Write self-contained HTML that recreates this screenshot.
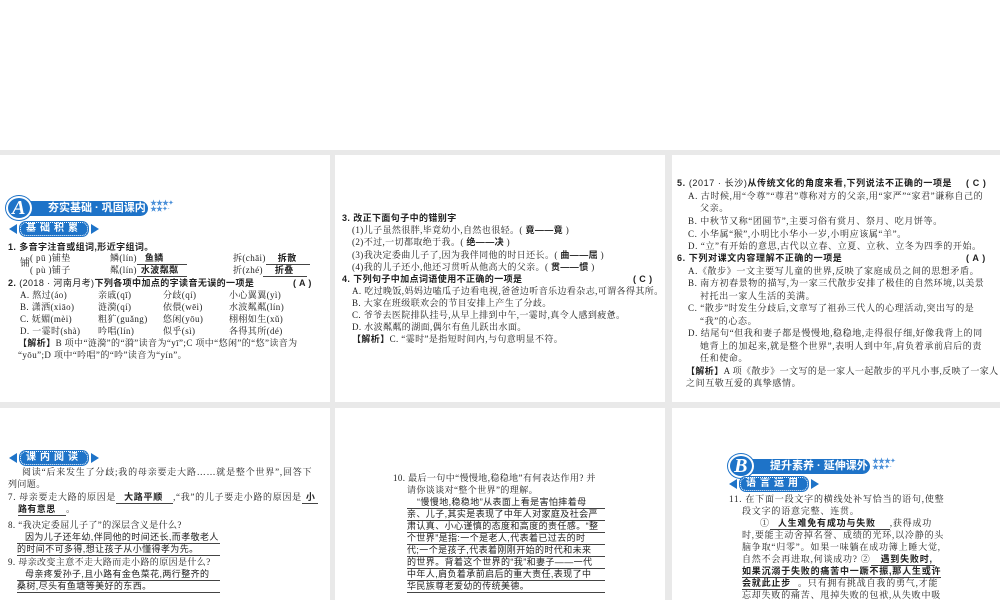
<!DOCTYPE html>
<html><head><meta charset="utf-8">
<style>
*{margin:0;padding:0;box-sizing:border-box}
body{width:1000px;height:600px;background:#fff;position:relative;overflow:hidden;font-family:"Liberation Serif","Noto Serif CJK SC",serif;font-size:9px;color:#222;letter-spacing:.4px}
.bg{position:absolute;left:0;top:150px;width:1000px;height:450px;background:#e9e9e9}
.p{position:absolute;background:#fff}
.l{position:absolute;white-space:nowrap;line-height:11px}
.b{font-family:"Liberation Sans","Noto Sans CJK SC",sans-serif;font-weight:bold}
.a{font-family:"Liberation Sans","Noto Sans CJK SC",sans-serif;font-weight:bold;border-bottom:1px solid #444}
.u{border-bottom:1px solid #444}
.hd{position:absolute;height:15px;background:#1e73c8;border-radius:0 8px 8px 0;color:#fff;font-family:"Liberation Sans","Noto Sans CJK SC",sans-serif;font-weight:bold;font-size:11px;line-height:15px;padding-left:20px;white-space:nowrap;letter-spacing:0}
.cir{position:absolute;width:26px;height:24px;border-radius:50%;background:#1e73c8;border:2px solid #fff;box-shadow:0 0 0 1px #1e73c8;color:#fff;font:italic bold 20px/20px "Liberation Serif",serif;text-align:center}
.st{position:absolute;color:#4a8fd8;font-size:7px;line-height:6px;letter-spacing:-1px}
.sub{position:absolute;height:14px}
.sub .t1{position:absolute;left:0;top:2px;width:0;height:0;border-top:5px solid transparent;border-bottom:5px solid transparent;border-right:8px solid #1e73c8}
.sub .t2{position:absolute;right:0;top:2px;width:0;height:0;border-top:5px solid transparent;border-bottom:5px solid transparent;border-left:8px solid #1e73c8}
.sub .pl{position:absolute;left:11px;right:11px;top:0;height:14px;background:#1e73c8;border-radius:6px;border:1px dotted #fff;box-shadow:0 0 0 1px #1e73c8;color:#fff;font-family:"Liberation Sans","Noto Sans CJK SC",sans-serif;font-weight:bold;font-size:10px;line-height:12px;text-align:center;letter-spacing:4px;white-space:nowrap}
.p3 .l{letter-spacing:.6px}
</style></head><body>
<div class="bg"></div>
<div class="p" style="left:0;top:155px;width:330px;height:247px"></div>
<div class="p" style="left:335px;top:155px;width:330px;height:247px"></div>
<div class="p" style="left:672px;top:155px;width:328px;height:247px"></div>
<div class="p" style="left:0;top:408px;width:330px;height:192px"></div>
<div class="p" style="left:335px;top:408px;width:330px;height:192px"></div>
<div class="p" style="left:672px;top:408px;width:328px;height:192px"></div>

<!-- Panel 1 -->
<div class="hd" style="left:28px;top:201px;width:120px">夯实基础 · 巩固课内</div>
<div class="cir" style="left:6px;top:196px">A</div>
<div class="st" style="left:150px;top:200px">★★★✦<br>★★✦ ·</div>
<div class="sub" style="left:9px;top:222px;width:90px"><div class="t1"></div><div class="pl">基础积累</div><div class="t2"></div></div>
<div class="l b" style="left:8px;top:242px">1. 多音字注音或组词,形近字组词。</div>
<div class="l" style="left:20px;top:253px;font-size:10px;line-height:22px">铺</div>
<div class="l" style="left:30px;top:253px">(&nbsp;pū&nbsp;)铺垫</div>
<div class="l" style="left:30px;top:265px">(&nbsp;pù&nbsp;)铺子</div>
<div class="l" style="left:110px;top:253px">鳞(lín)<span class="a" style="display:inline-block;width:50px;padding-left:8px">鱼鳞</span></div>
<div class="l" style="left:110px;top:265px">粼(lín)<span class="a" style="display:inline-block;width:50px;padding-left:4px">水波粼粼</span></div>
<div class="l" style="left:233px;top:253px">拆(chāi)<span class="a" style="display:inline-block;width:44px;padding-left:12px">拆散</span></div>
<div class="l" style="left:233px;top:265px">折(zhé)<span class="a" style="display:inline-block;width:44px;padding-left:12px">折叠</span></div>
<div class="l b" style="left:8px;top:278px">2. <span style="font-weight:normal">(2018 · 河南月考)</span>下列各项中加点的字读音无误的一项是</div>
<div class="l b" style="left:293px;top:278px">( A )</div>
<div class="l" style="left:20px;top:290px">A. 熬过(áo)</div><div class="l" style="left:98px;top:290px">亲戚(qī)</div><div class="l" style="left:163px;top:290px">分歧(qí)</div><div class="l" style="left:229px;top:290px">小心翼翼(yì)</div>
<div class="l" style="left:20px;top:302px">B. 潇洒(xiāo)</div><div class="l" style="left:98px;top:302px">涟漪(qí)</div><div class="l" style="left:163px;top:302px">依偎(wēi)</div><div class="l" style="left:229px;top:302px">水波粼粼(lín)</div>
<div class="l" style="left:20px;top:314px">C. 妩媚(mèi)</div><div class="l" style="left:98px;top:314px">粗犷(guǎng)</div><div class="l" style="left:163px;top:314px">悠闲(yōu)</div><div class="l" style="left:229px;top:314px">栩栩如生(xǔ)</div>
<div class="l" style="left:20px;top:326px">D. 一霎时(shà)</div><div class="l" style="left:98px;top:326px">吟唱(lín)</div><div class="l" style="left:163px;top:326px">似乎(sì)</div><div class="l" style="left:229px;top:326px">各得其所(dé)</div>
<div class="l" style="left:18px;top:338px"><b class="b">【解析】</b>B 项中“涟漪”的“漪”读音为“yī”;C 项中“悠闲”的“悠”读音为</div>
<div class="l" style="left:18px;top:350px">“yōu”;D 项中“吟唱”的“吟”读音为“yín”。</div>

<!-- Panel 2 -->
<div class="l b" style="left:342px;top:213px">3. 改正下面句子中的错别字</div>
<div class="l" style="left:352px;top:225px">(1)儿子虽然很胖,毕竟幼小,自然也很轻。( <b class="b">竟——竟</b> )</div>
<div class="l" style="left:352px;top:237px">(2)不过,一切都取绝于我。( <b class="b">绝——决</b> )</div>
<div class="l" style="left:352px;top:250px">(3)我决定委曲儿子了,因为我伴同他的时日还长。( <b class="b">曲——屈</b> )</div>
<div class="l" style="left:352px;top:262px">(4)我的儿子还小,他还习贯听从他高大的父亲。( <b class="b">贯——惯</b> )</div>
<div class="l b" style="left:342px;top:274px">4. 下列句子中加点词语使用不正确的一项是</div>
<div class="l b" style="left:633px;top:274px">( C )</div>
<div class="l" style="left:352px;top:286px">A. 吃过晚饭,妈妈边嗑瓜子边看电视,爸爸边听音乐边看杂志,可谓各得其所。</div>
<div class="l" style="left:352px;top:298px">B. 大家在班级联欢会的节目安排上产生了分歧。</div>
<div class="l" style="left:352px;top:310px">C. 爷爷去医院排队挂号,从早上排到中午,一霎时,真令人感到疲惫。</div>
<div class="l" style="left:352px;top:322px">D. 水波粼粼的湖面,偶尔有鱼儿跃出水面。</div>
<div class="l" style="left:352px;top:334px"><b class="b">【解析】</b>C. “霎时”是指短时间内,与句意明显不符。</div>

<!-- Panel 3 -->
<div class="p3">
<div class="l b" style="left:677px;top:178px">5. <span style="font-weight:normal">(2017 · 长沙)</span>从传统文化的角度来看,下列说法不正确的一项是</div>
<div class="l b" style="left:966px;top:178px">( C )</div>
<div class="l" style="left:688px;top:191px">A. 古时候,用“令尊”“尊君”尊称对方的父亲,用“家严”“家君”谦称自己的</div>
<div class="l" style="left:700px;top:203px">父亲。</div>
<div class="l" style="left:688px;top:216px">B. 中秋节又称“团圆节”,主要习俗有赏月、祭月、吃月饼等。</div>
<div class="l" style="left:688px;top:229px">C. 小华属“猴”,小明比小华小一岁,小明应该属“羊”。</div>
<div class="l" style="left:688px;top:241px">D. “立”有开始的意思,古代以立春、立夏、立秋、立冬为四季的开始。</div>
<div class="l b" style="left:677px;top:253px">6. 下列对课文内容理解不正确的一项是</div>
<div class="l b" style="left:966px;top:253px">( A )</div>
<div class="l" style="left:688px;top:266px">A.《散步》一文主要写儿童的世界,反映了家庭成员之间的思想矛盾。</div>
<div class="l" style="left:688px;top:278px">B. 南方初春景物的描写,为一家三代散步安排了极佳的自然环境,以美景</div>
<div class="l" style="left:700px;top:291px">衬托出一家人生活的美满。</div>
<div class="l" style="left:688px;top:303px">C. “散步”时发生分歧后,文章写了祖孙三代人的心理活动,突出写的是</div>
<div class="l" style="left:700px;top:316px">“我”的心态。</div>
<div class="l" style="left:688px;top:328px">D. 结尾句“但我和妻子都是慢慢地,稳稳地,走得很仔细,好像我背上的同</div>
<div class="l" style="left:700px;top:341px">她背上的加起来,就是整个世界”,表明人到中年,肩负着承前启后的责</div>
<div class="l" style="left:700px;top:353px">任和使命。</div>
<div class="l" style="left:686px;top:366px;letter-spacing:.4px"><b class="b">【解析】</b>A 项《散步》一文写的是一家人一起散步的平凡小事,反映了一家人</div>
<div class="l" style="left:686px;top:378px">之间互敬互爱的真挚感情。</div>
</div>

<!-- Panel 4 -->
<div class="sub" style="left:9px;top:451px;width:90px"><div class="t1"></div><div class="pl">课内阅读</div><div class="t2"></div></div>
<div class="l" style="left:22px;top:467px;letter-spacing:.8px">阅读“后来发生了分歧;我的母亲要走大路……就是整个世界”,回答下</div>
<div class="l" style="left:8px;top:479px">列问题。</div>
<div class="l" style="left:8px;top:492px;letter-spacing:.7px">7. 母亲要走大路的原因是<span class="a" style="display:inline-block;width:57px;padding-left:8px">大路平顺</span>,“我”的儿子要走小路的原因是<span class="a" style="display:inline-block;width:16px;padding-left:4px">小</span></div>
<div class="l" style="left:18px;top:504px"><span class="a" style="display:inline-block;width:48px">路有意思</span>。</div>
<div class="l" style="left:8px;top:520px">8. “我决定委屈儿子了”的深层含义是什么?</div>
<div class="l b u" style="left:17px;top:532px;width:203px;padding-left:8px;font-weight:normal">因为儿子还年幼,伴同他的时间还长,而孝敬老人</div>
<div class="l b u" style="left:17px;top:544px;width:203px;font-weight:normal">的时间不可多得,想让孩子从小懂得孝为先。</div>
<div class="l" style="left:8px;top:557px">9. 母亲改变主意不走大路而走小路的原因是什么?</div>
<div class="l b u" style="left:17px;top:569px;width:203px;padding-left:8px;font-weight:normal">母亲疼爱孙子,且小路有金色菜花,两行整齐的</div>
<div class="l b u" style="left:17px;top:581px;width:203px;font-weight:normal">桑树,尽头有鱼塘等美好的东西。</div>

<!-- Panel 5 -->
<div class="l" style="left:393px;top:473px">10. 最后一句中“慢慢地,稳稳地”有何表达作用? 并</div>
<div class="l" style="left:407px;top:485px">请你谈谈对“整个世界”的理解。</div>
<div class="l u" style="left:407px;top:497px;width:198px;padding-left:10px;font-family:'Liberation Sans','Noto Sans CJK SC',sans-serif">“慢慢地,稳稳地”从表面上看是害怕摔着母</div>
<div class="l u" style="left:407px;top:509px;width:198px;font-family:'Liberation Sans','Noto Sans CJK SC',sans-serif">亲、儿子,其实是表现了中年人对家庭及社会严</div>
<div class="l u" style="left:407px;top:521px;width:198px;font-family:'Liberation Sans','Noto Sans CJK SC',sans-serif">肃认真、小心谨慎的态度和高度的责任感。“整</div>
<div class="l u" style="left:407px;top:533px;width:198px;font-family:'Liberation Sans','Noto Sans CJK SC',sans-serif">个世界”是指:一个是老人,代表着已过去的时</div>
<div class="l u" style="left:407px;top:545px;width:198px;font-family:'Liberation Sans','Noto Sans CJK SC',sans-serif">代;一个是孩子,代表着刚刚开始的时代和未来</div>
<div class="l u" style="left:407px;top:557px;width:198px;font-family:'Liberation Sans','Noto Sans CJK SC',sans-serif">的世界。背着这个世界的“我”和妻子——一代</div>
<div class="l u" style="left:407px;top:569px;width:198px;font-family:'Liberation Sans','Noto Sans CJK SC',sans-serif">中年人,肩负着承前启后的重大责任,表现了中</div>
<div class="l u" style="left:407px;top:581px;width:198px;font-family:'Liberation Sans','Noto Sans CJK SC',sans-serif">华民族尊老爱幼的传统美德。</div>

<!-- Panel 6 -->
<div class="hd" style="left:750px;top:459px;width:120px">提升素养 · 延伸课外</div>
<div class="cir" style="left:728px;top:454px">B</div>
<div class="st" style="left:872px;top:458px">★★★✦<br>★★✦ ·</div>
<div class="sub" style="left:729px;top:477px;width:90px"><div class="t1"></div><div class="pl">语言运用</div><div class="t2"></div></div>
<div class="l" style="left:729px;top:494px;letter-spacing:.8px">11. 在下面一段文字的横线处补写恰当的语句,使整</div>
<div class="l" style="left:742px;top:506px;letter-spacing:.8px">段文字的语意完整、连贯。</div>
<div class="l" style="left:760px;top:518px;letter-spacing:.8px">①<span class="a" style="display:inline-block;width:120px;padding-left:8px">人生难免有成功与失败</span>,获得成功</div>
<div class="l" style="left:742px;top:530px;letter-spacing:.8px">时,要能主动舍掉名誉、成绩的光环,以冷静的头</div>
<div class="l" style="left:742px;top:542px;letter-spacing:.8px">脑争取“归零”。如果一味躺在成功簿上睡大觉,</div>
<div class="l" style="left:742px;top:554px;letter-spacing:.8px">自然不会再进取,何谈成功? ②<span class="a" style="display:inline-block;width:64px;padding-left:10px">遇到失败时,</span></div>
<div class="l a" style="left:742px;top:566px;letter-spacing:.8px">如果沉溺于失败的痛苦中一蹶不振,那人生或许</div>
<div class="l" style="left:742px;top:578px;letter-spacing:.8px"><span class="a" style="display:inline-block;width:56px">会就此止步</span>。只有拥有挑战自我的勇气,才能</div>
<div class="l" style="left:742px;top:590px;letter-spacing:.8px">忘却失败的痛苦、甩掉失败的包袱,从失败中吸</div>
</body></html>
